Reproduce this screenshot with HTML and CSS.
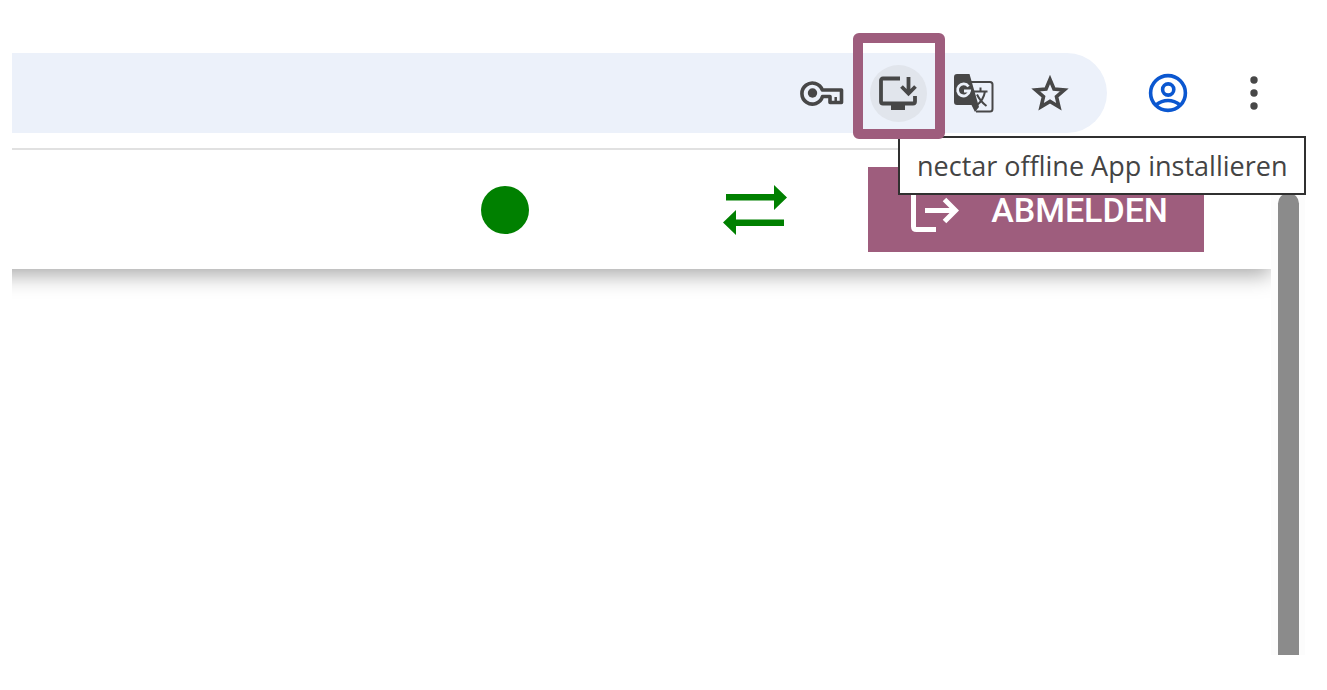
FILE: index.html
```
<!DOCTYPE html>
<html lang="de">
<head>
<meta charset="utf-8">
<title>nectar offline App</title>
<link rel="stylesheet" href="styles.css">
</head>
<body>
<div class="browser">
  <header class="toolbar">
    <div class="omnibox">
      <button class="tool" aria-label="Passwörter">
        <svg width="44" height="26" viewBox="0 0 44 26" fill="none" stroke="#474747" stroke-width="3.600" stroke-linejoin="round"><path d="M22.300 10H41.500V22.500H30V16.500H22.500A10.500 10.500 0 1 1 22.300 10Z"/><path d="M35.700 17V22" stroke-width="2.500"/><circle cx="12.500" cy="13" r="4.700" fill="#474747" stroke="none"/></svg>
      </button>
      <div class="install">
        <button class="tool round" aria-label="App installieren" aria-describedby="install-tip">
          <svg width="40" height="36" viewBox="0 0 40 36" fill="none" stroke="#474747" stroke-width="3.800"><path d="M22 3.500H5Q3 3.500 3 5.500V26.500Q3 28.500 5 28.500H35Q37 28.500 37 26.500V21" stroke-linejoin="round"/><path d="M13 28H27V35H13Z" fill="#474747" stroke="none"/><path d="M30.500 2V18M23.500 11.500L30.500 18.500L37.500 11.500"/></svg>
        </button>
        <div class="highlight"></div>
        <div class="tooltip" id="install-tip" role="tooltip">nectar offline App installieren</div>
      </div>
      <button class="tool" aria-label="Seite übersetzen">
        <svg width="40" height="40" viewBox="0 0 40 40"><path d="M16 9H36Q38.500 9 38.500 11.500V36Q38.500 38.500 36 38.500H22" fill="none" stroke="#474747" stroke-width="2"/><path d="M3 1H15.500L25 34L21 39L17.500 32H3Q0 32 0 29V4Q0 1 3 1Z" fill="#474747"/><path d="M14.500 13.500A6 6 0 1 0 15.500 18H10" fill="none" stroke="#ecf1fa" stroke-width="2.800"/><path d="M20 18.500H33.500M26.500 14.500V18.500M23 21.500Q26 28 32.500 33M31 18.500Q29.500 27 23 32" fill="none" stroke="#474747" stroke-width="2"/></svg>
      </button>
      <button class="tool" aria-label="Lesezeichen">
        <svg width="40" height="38" viewBox="0 0 40 38" fill="none" stroke="#474747" stroke-width="3.600"><path d="M20 5.500L24 15L34.300 15.900L26.500 22.700L28.900 32.800L20 27.400L11.100 32.800L13.500 22.700L5.700 15.900L16 15Z"/></svg>
      </button>
    </div>
    <div class="browser-actions">
      <button class="action" aria-label="Profil">
        <svg width="40" height="40" viewBox="0 0 40 40" fill="none" stroke="#0b57d0" stroke-width="3.600"><circle cx="20" cy="20" r="17.400"/><circle cx="20.200" cy="16.500" r="5.600"/><path d="M8 32Q13.500 27.500 20 27.500T32 32"/></svg>
      </button>
      <button class="action" aria-label="Menü">
        <svg width="8" height="34" viewBox="0 0 8 34" fill="#474747"><circle cx="4" cy="4" r="3.700"/><circle cx="4" cy="17" r="3.700"/><circle cx="4" cy="30" r="3.700"/></svg>
      </button>
    </div>
  </header>
  <div class="viewport">
    <main class="page">
      <div class="appbar">
        <span class="status" role="img" aria-label="Online"></span>
        <button class="sync" aria-label="Synchronisieren">
          <svg width="64" height="50" viewBox="0 0 64 50" fill="green"><path d="M3 9H51V0L64 12.500L51 25V15.500H3ZM61 34.500H13V25L0 37.500L13 50V41H61Z"/></svg>
        </button>
        <button class="logout">
          <svg width="48" height="44" viewBox="0 0 48 44" fill="none" stroke="#fff" stroke-width="5"><path d="M25 2.500H5.500Q2.500 2.500 2.500 5.500V38.500Q2.500 41.500 5.500 41.500H25" /><path d="M14 22.500H44M33.500 11.500L44.500 22.500L33.500 33.500"/></svg>
          <span>ABMELDEN</span>
        </button>
      </div>
    </main>
    <div class="scroll-track"><div class="scroll-thumb"></div></div>
  </div>
</div>
</body>
</html>
```
FILE: styles.css
```
* { box-sizing: border-box; }
body {
  margin: 0;
  background: #fff;
  font-family: Roboto, sans-serif;
}
button {
  display: flex;
  align-items: center;
  justify-content: center;
  margin: 0;
  padding: 0;
  border: 0;
  background: none;
  font: inherit;
}
svg { display: block; flex: none; }
.browser {
  display: flex;
  flex-direction: column;
  min-height: 100vh;
  padding: 53px 22px 35px 12px;
}
.toolbar {
  display: flex;
  padding-bottom: 15px;
  border-bottom: 2px solid #e1e1e1;
}
.omnibox {
  display: flex;
  flex: 1;
  align-items: center;
  justify-content: flex-end;
  height: 80px;
  padding-right: 19px;
  border-radius: 0 40px 40px 0;
  background: #ecf1fa;
}
.tool { width: 76px; height: 56px; }
.install {
  position: relative;
  display: flex;
  justify-content: center;
  width: 76px;
}
.round {
  width: 57px;
  height: 57px;
  border-radius: 50%;
  background: #e1e5ec;
}
.highlight {
  position: absolute;
  z-index: 2;
  top: -32px;
  left: -7px;
  width: 92px;
  height: 106px;
  border: 10px solid #9e5d7d;
  border-radius: 6px;
}
.tooltip {
  position: absolute;
  z-index: 1;
  top: 71px;
  left: 38px;
  padding: 9px 17px 8px;
  border: 2px solid #303030;
  background: #fff;
  color: #444;
  font: 27px/38px "Open Sans", sans-serif;
  white-space: nowrap;
}
.browser-actions {
  display: flex;
  align-items: center;
  padding: 0 8px 0 18px;
}
.action { width: 86px; height: 56px; }
.viewport { display: flex; flex: 1; }
.page { flex: 1; overflow: hidden; }
.appbar {
  display: flex;
  align-items: center;
  justify-content: flex-end;
  margin-left: -24px;
  padding: 17px 67px 17px 0;
  background: #fff;
  box-shadow: 0 6px 20px rgba(0, 0, 0, 0.34);
}
.status {
  width: 48px;
  height: 48px;
  margin-right: 194px;
  border-radius: 50%;
  background: green;
}
.sync { margin-right: 81px; }
.logout {
  gap: 32px;
  padding: 0 36px 0 43px;
  height: 85px;
  background: #9e5d7d;
  color: #fff;
  font-size: 34px;
  font-weight: 500;
}
.scroll-track {
  display: flex;
  width: 34px;
  padding: 43px 6px 0 7px;
  background: #fcfcfc;
}
.scroll-thumb {
  flex: 1;
  border-radius: 11px 11px 0 0;
  background: #8b8b8b;
}
```
